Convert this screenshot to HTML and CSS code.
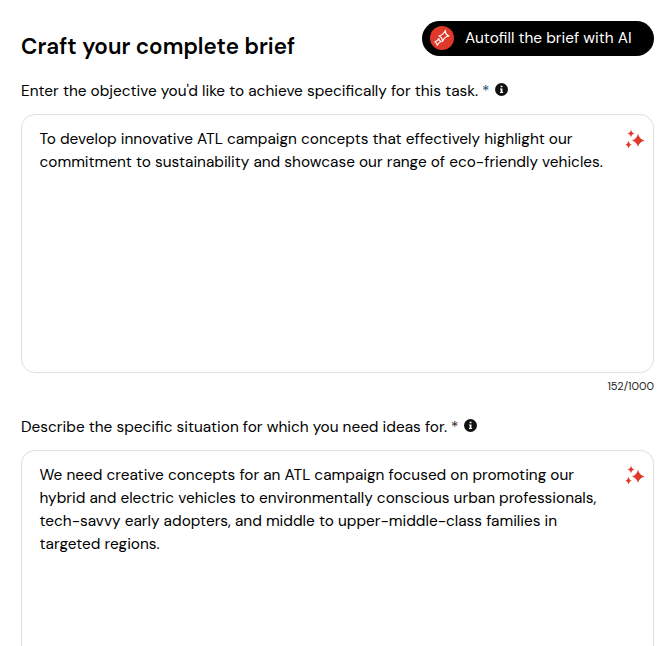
FILE: index.html
```html
<!DOCTYPE html>
<html lang="en">
<head>
  <meta charset="UTF-8">
  <title>Craft your complete brief</title>
  <link rel="stylesheet" href="styles.css">
</head>
<body>

  <svg class="sprite">
    <symbol id="sparkles" viewBox="0 0 20 20">
      <path d="M13 4.500Q14 10 19.500 11.500Q14 13 13 18Q12 13 7 11.500Q12 10 13 4.500Z"/>
      <path d="M6 .5Q6.500 4 9.500 4.500Q6.500 5.200 6 8.500Q5.500 5.200 2.500 4.500Q5.500 4 6 .5Z"/>
      <path d="M3.500 11.500Q4 15 6.700 15.800Q4 16.300 3.500 19.700Q3 16.300 .3 15.800Q3 15 3.500 11.500Z"/>
    </symbol>
    <symbol id="info" viewBox="0 0 12 12">
      <circle cx="6" cy="6" r="6" fill="#111"/>
      <path d="M5.200 2.500h1.700v1.400H5.200zM4.700 5h2.200v3.200h.6v1.100H4.600V8.200h.6V6.100h-.5z" fill="#fff"/>
    </symbol>
  </svg>

  <div class="header">
    <h1>Craft your complete brief</h1>
    <button class="autofill">
      <span class="autofill-icon">
        <svg viewBox="0 0 24 24">
          <path d="M15.500 4.500Q15 8.500 19 10Q14.500 10.500 12.500 15.500Q12.500 11.500 9 10Q13 9 15.500 4.500Z"/>
          <path d="M8.800 12.500Q8.800 14.800 11.200 15.500Q8.800 16.300 7.200 19.200Q7.200 16.900 4.800 16Q7.500 15.300 8.800 12.500Z"/>
        </svg>
      </span>
      <span class="autofill-text">Autofill the brief with AI</span>
    </button>
  </div>

  <!-- Objective -->
  <div class="field">
    <label class="label" for="objective">
      <span class="label-text">Enter the objective you'd like to achieve specifically for this task.</span>
      <span class="required blue">*</span>
      <svg class="info"><use href="#info"/></svg>
    </label>
    <div class="box">
      <textarea id="objective" spellcheck="false">To develop innovative ATL campaign concepts that effectively highlight our commitment to sustainability and showcase our range of eco-friendly vehicles.</textarea>
      <svg class="sparkles"><use href="#sparkles"/></svg>
    </div>
    <div class="counter">152/1000</div>
  </div>

  <!-- Situation -->
  <div class="field">
    <label class="label" for="situation">
      <span class="label-text">Describe the specific situation for which you need ideas for.</span>
      <span class="required">*</span>
      <svg class="info"><use href="#info"/></svg>
    </label>
    <div class="box">
      <textarea id="situation" class="situation" spellcheck="false">We need creative concepts for an ATL campaign focused on promoting our hybrid and electric vehicles to environmentally conscious urban professionals, tech-savvy early adopters, and middle to upper-middle-class families in targeted regions.</textarea>
      <svg class="sparkles"><use href="#sparkles"/></svg>
    </div>
  </div>

</body>
</html>
```

FILE: styles.css
```css
* {
  box-sizing: border-box;
  font-family: 'DM Sans', Inter, sans-serif;
}

body {
  margin: 0;
  padding: 21px 17px 0 21px;
  height: 646px;
  background: #fff;
  color: #000;
  overflow: hidden;
}

.sprite {
  display: none;
}

.header {
  display: flex;
  justify-content: space-between;
  height: 58px;
}

h1 {
  margin: 11px 0 0;
  font-size: 22.4px;
  font-weight: 600;
  line-height: 30px;
  white-space: nowrap;
}

.autofill {
  display: flex;
  align-items: center;
  gap: 11px;
  width: 232px;
  height: 35px;
  padding: 0 0 0 8px;
  border: none;
  border-radius: 18px;
  background: #000;
  color: #fff;
  font-size: 15.4px;
  cursor: pointer;
}

.autofill-icon {
  width: 24px;
  height: 24px;
  margin-top: -1px;
  border-radius: 50%;
  background: #e0392a;
}

.autofill-icon svg {
  display: block;
  width: 24px;
  height: 24px;
  fill: none;
  stroke: #fff;
  stroke-width: 1.2;
  stroke-linejoin: round;
}

.autofill-text {
  margin-top: -2px;
  white-space: nowrap;
}

.label {
  display: flex;
  align-items: center;
  height: 24px;
  margin-bottom: 11px;
  font-size: 15.4px;
  white-space: nowrap;
}

.required {
  margin-left: 4px;
  color: #3a1d10;
}

.required.blue {
  color: #164f86;
}

.info {
  width: 13px;
  height: 13px;
  margin: -3px 0 0 6px;
}

.box {
  position: relative;
}

textarea {
  display: block;
  width: 633px;
  height: 259px;
  padding: 12.5px 44px 12px 17.5px;
  border: 1px solid #e0e0e0;
  border-radius: 14px;
  outline: none;
  resize: none;
  overflow: hidden;
  color: #000;
  font-size: 15.4px;
  line-height: 23px;
}

.situation {
  height: 196px;
  border-bottom: none;
  border-radius: 14px 14px 0 0;
}

.sparkles {
  position: absolute;
  top: 15px;
  right: 9px;
  width: 20px;
  height: 20px;
  fill: #e0392a;
}

.counter {
  height: 42px;
  padding-top: 5px;
  color: #222;
  font-size: 11px;
  line-height: 16px;
  text-align: right;
}
```
